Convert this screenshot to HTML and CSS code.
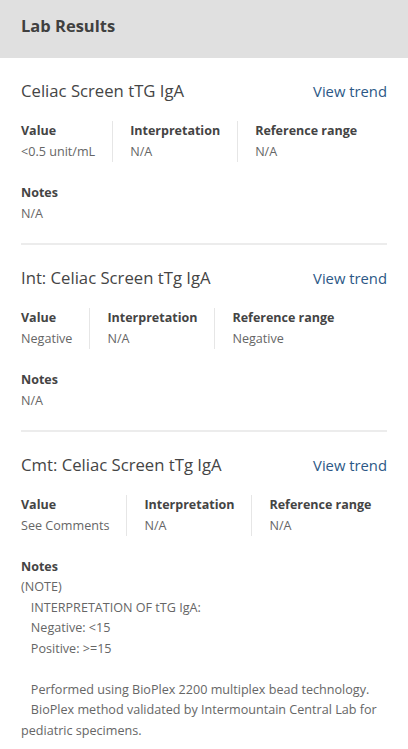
FILE: index.html
```html
<!DOCTYPE html>
<html lang="en">
<head>
<meta charset="utf-8">
<title>Lab Results</title>
<link rel="stylesheet" href="styles.css">
</head>
<body>
<header class="topbar"><h1 class="topbar-title">Lab Results</h1></header>
<main class="results">
  <section class="result">
    <div class="result-head">
      <h2 class="result-title">Celiac Screen tTG IgA</h2>
      <a class="trend-link" href="#">View trend</a>
    </div>
    <div class="fields">
      <div class="field"><div class="label">Value</div><div class="val">&lt;0.5 unit/mL</div></div>
      <div class="field"><div class="label">Interpretation</div><div class="val">N/A</div></div>
      <div class="field"><div class="label">Reference range</div><div class="val">N/A</div></div>
    </div>
    <div class="notes"><div class="label">Notes</div><div class="val">N/A</div></div>
  </section>
  <section class="result">
    <div class="result-head">
      <h2 class="result-title">Int: Celiac Screen tTg IgA</h2>
      <a class="trend-link" href="#">View trend</a>
    </div>
    <div class="fields">
      <div class="field"><div class="label">Value</div><div class="val">Negative</div></div>
      <div class="field"><div class="label">Interpretation</div><div class="val">N/A</div></div>
      <div class="field"><div class="label">Reference range</div><div class="val">Negative</div></div>
    </div>
    <div class="notes"><div class="label">Notes</div><div class="val">N/A</div></div>
  </section>
  <section class="result">
    <div class="result-head">
      <h2 class="result-title">Cmt: Celiac Screen tTg IgA</h2>
      <a class="trend-link" href="#">View trend</a>
    </div>
    <div class="fields">
      <div class="field"><div class="label">Value</div><div class="val">See Comments</div></div>
      <div class="field"><div class="label">Interpretation</div><div class="val">N/A</div></div>
      <div class="field"><div class="label">Reference range</div><div class="val">N/A</div></div>
    </div>
    <div class="notes"><div class="label">Notes</div><div class="val note-text">(NOTE)
   INTERPRETATION OF tTG IgA:
   Negative: &lt;15
   Positive: &gt;=15

   Performed using BioPlex 2200 multiplex bead technology.
   BioPlex method validated by Intermountain Central Lab for pediatric specimens.</div></div>
  </section>
</main>
</body>
</html>
```

FILE: styles.css
```css
* { box-sizing: border-box; }
html, body { margin: 0; padding: 0; }
body {
  font-family: "Open Sans", "Liberation Sans", sans-serif;
  background: #ffffff;
  color: #444444;
}
.topbar {
  background: #e0e0e0;
  height: 58px;
  padding: 0 21px;
  display: flex;
  align-items: center;
}
.topbar-title {
  margin: 0 0 8px 0;
  font-size: 16.5px;
  font-weight: 700;
  color: #404040;
}
.results { padding: 0 21px; }
.result {
  padding: 21px 0 19px;
  border-bottom: 2px solid #ececec;
}
.result:last-child { border-bottom: none; }
.result-head {
  display: flex;
  justify-content: space-between;
  align-items: center;
  height: 24px;
}
.result-title {
  margin: 0;
  font-size: 16.7px;
  font-weight: 400;
  color: #454545;
  line-height: 24px;
}
.trend-link {
  font-size: 14.8px;
  color: #2c5886;
  text-decoration: none;
  line-height: 24px;
}
.fields {
  display: flex;
  margin-top: 18px;
  white-space: nowrap;
}
.field {
  flex: 0 0 auto;
  padding: 0 17px;
  border-left: 1px solid #e6e6e6;
}
.field:first-child { padding-left: 0; border-left: none; }
.label {
  font-size: 12.5px;
  font-weight: 700;
  color: #444444;
  line-height: 20px;
}
.val {
  font-size: 12.6px;
  color: #666666;
  line-height: 21px;
}
.notes { margin-top: 21px; }
.note-text {
  white-space: pre-wrap;
  line-height: 20.5px;
}
```
